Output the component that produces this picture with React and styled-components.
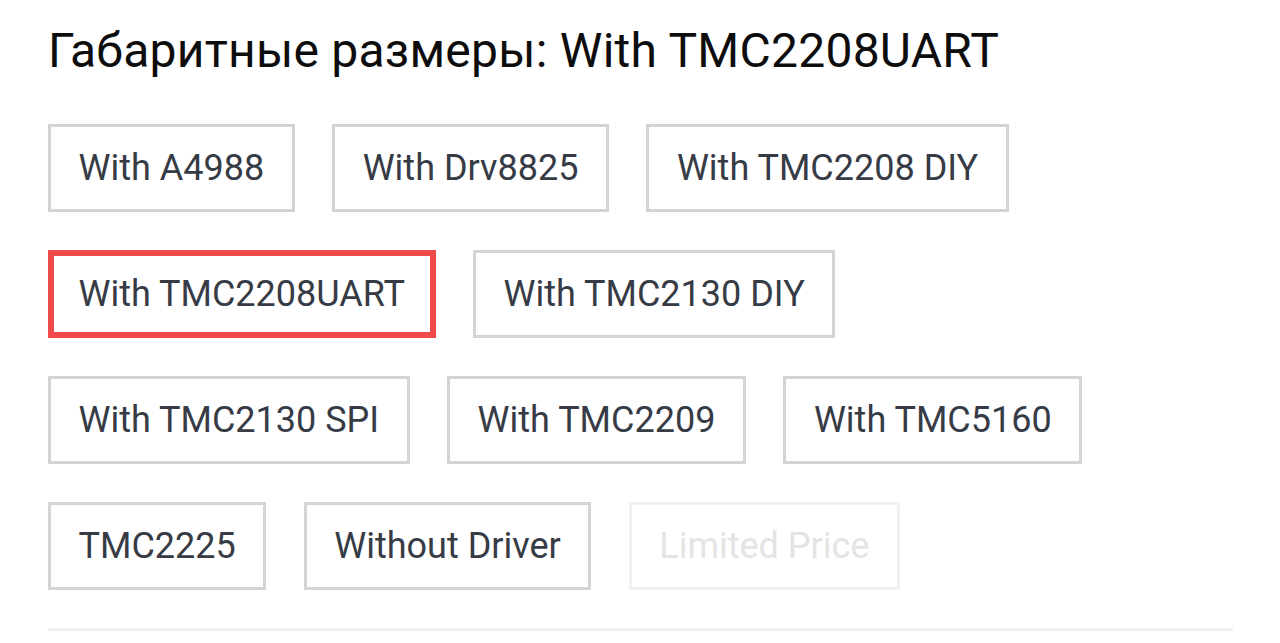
import React from "react";
import styled, { createGlobalStyle } from "styled-components";

const Global = createGlobalStyle`
  html, body { margin: 0; padding: 0; background: #ffffff; }
  body { font-family: Roboto, "Noto Sans", Arial, sans-serif; }
`;

const Page = styled.div`
  width: 1280px;
  height: 643px;
  box-sizing: border-box;
  padding: 23px 47px 0 48px;
  overflow: hidden;
`;

const Title = styled.h2`
  margin: 0;
  font-family: Roboto, sans-serif;
  font-weight: 400;
  font-size: 48px;
  letter-spacing: 0.25px;
  line-height: 56px;
  color: #0d0d0d;
`;

const Options = styled.div`
  margin-top: 45px;
  display: flex;
  flex-direction: column;
  gap: 38px;
`;

const Row = styled.div`
  display: flex;
  gap: 37.5px;
`;

const Option = styled.button`
  height: 88px;
  box-sizing: border-box;
  padding: 0 27.5px;
  background: #ffffff;
  border: 3px solid ${(p) => (p.$disabled ? "#f1f1f1" : p.$selected ? "#f04a4a" : "#d4d4d4")};
  box-shadow: ${(p) => (p.$selected ? "inset 0 0 0 3px #f04a4a" : "none")};
  font-family: Roboto, sans-serif;
  font-size: 36px;
  font-weight: 400;
  color: ${(p) => (p.$disabled ? "#e4e4e4" : "#363b46")};
  white-space: nowrap;
  cursor: pointer;
`;

const Divider = styled.div`
  margin-top: 38px;
  height: 3px;
  background: #f0f0f0;
`;

const rows = [
  ["With A4988", "With Drv8825", "With TMC2208 DIY"],
  ["With TMC2208UART", "With TMC2130 DIY"],
  ["With TMC2130 SPI", "With TMC2209", "With TMC5160"],
  ["TMC2225", "Without Driver", "Limited Price"],
];

export default function App() {
  return (
    <>
      <Global />
      <Page>
        <Title>Габаритные размеры: With TMC2208UART</Title>
        <Options>
          {rows.map((r, i) => (
            <Row key={i}>
              {r.map((label) => (
                <Option
                  key={label}
                  $selected={label === "With TMC2208UART"}
                  $disabled={label === "Limited Price"}
                >
                  {label}
                </Option>
              ))}
            </Row>
          ))}
        </Options>
        <Divider />
      </Page>
    </>
  );
}
